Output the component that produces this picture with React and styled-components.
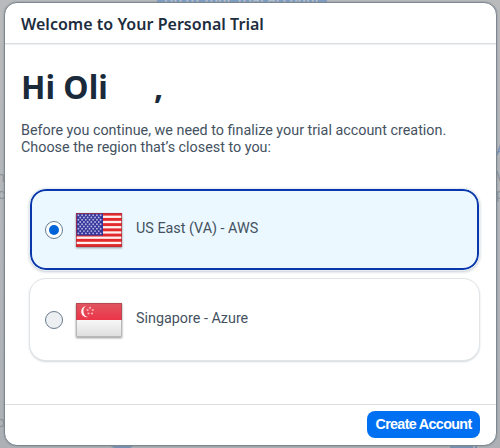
import React from "react";
import styled, { createGlobalStyle } from "styled-components";

const Global = createGlobalStyle`
  * { box-sizing: border-box; }
  body { margin: 0; overflow: hidden; }
  p, h1, h2 { margin: 0; }
`;
const Page = styled.div`
  position: relative;
  width: 500px;
  height: 448px;
  padding: 2px 3px 2px 4px;
  overflow: hidden;
  background: linear-gradient(#b9babb, #b3b6ba 50%, #adb1b5);
  font-family: "Roboto", sans-serif;
  color: #44525f;
`;
const Backdrop = styled.div`
  position: absolute;
  inset: 0;
  display: grid;
  grid-template-columns: 5px 491px 4px;
  color: #8b9299;
  font-size: 14px;
  line-height: 17px;
`;
const Edge = styled.div`
  display: flex;
  flex-direction: column;
  align-items: ${p => p.$right ? "flex-start" : "flex-end"};
  padding: ${p => p.$right ? "142px 0 0" : "169px 0 17px"};
`;
const EdgeLink = styled.span`
  margin-bottom: 10px;
  color: #6f8fb9;
`;
const EdgeEnd = styled.span`
  margin-top: auto;
`;
const Center = styled.div`
  display: flex;
  flex-direction: column;
  justify-content: space-between;
`;
const Chip = styled.div`
  display: flex;
  align-items: flex-end;
  justify-content: center;
  width: 170px;
  height: 7px;
  margin-left: 152px;
  background: #7f9fc6;
  color: #b9c3cf;
  font: 600 13.3px/15px "Noto Sans", sans-serif;
  white-space: nowrap;
`;
const Markers = styled.div`
  display: flex;
  height: 5px;
  padding-left: 105px;
`;
const Circle = styled.div`
  width: 24px;
  margin-right: 316px;
  border-radius: 0 0 12px 12px;
  background: #7891b1;
`;
const Bar = styled.div`
  width: ${p => p.$thin ? "2px" : "23px"};
  margin-right: 2px;
  background: #7891b1;
`;
const Dialog = styled.section`
  position: relative;
  display: flex;
  flex-direction: column;
  width: 493px;
  height: 444px;
  border: 1px solid #7d8790;
  border-radius: 13px;
  background: #fff;
  overflow: hidden;
  box-shadow: 0 0 2px #7d8790;
`;
const Header = styled.header`
  flex: 0 0 41px;
  padding: 9px 16px 0;
  border-bottom: 1px solid #d9dcde;
  box-shadow: 0 1px 1px #f0f1f2;
`;
const Title = styled.h2`
  color: #1d2d3e;
  font: 600 16px/24px "Noto Sans", sans-serif;
  letter-spacing: 0.03px;
  white-space: nowrap;
`;
const Body = styled.main`
  flex: 1;
  padding: 22px 15px 0 16px;
`;
const Greeting = styled.h1`
  display: flex;
  color: #1a2a3a;
  font: 700 32px/42px "Noto Sans", sans-serif;
`;
const Name = styled.span`
  width: 133px;
`;
const Intro = styled.p`
  margin-top: 14px;
  font-size: 14.35px;
  line-height: 17px;
  white-space: nowrap;
`;
const Options = styled.div`
  display: grid;
  gap: 7px;
  margin: 32px 0 0 8px;
`;
const Option = styled.label`
  display: flex;
  align-items: center;
  width: 451px;
  height: 83px;
  padding-left: 15px;
  border-radius: 17px;
  border: 1px solid ${p => p.$selected ? "#e3edf2" : "#e1e5e8"};
  background: ${p => p.$selected ? "#ebf8ff" : "#fff"};
  box-shadow: ${p => p.$selected ? "inset 0 0 0 2px #0b37ac, 0 1px 3px #c5cdd3" : "0 1px 2px #d3d8dc"};
`;
const Radio = styled.span`
  display: grid;
  place-items: center;
  width: 18px;
  height: 18px;
  border: 1px solid #687b8e;
  border-radius: 50%;
  background: ${p => p.$selected ? "#fff" : "#edf0f2"};
  &::after {
    content: "";
    width: 10px;
    height: 10px;
    border-radius: 50%;
    background: ${p => p.$selected ? "#0064d9" : "transparent"};
  }
`;
const Flag = styled.svg`
  width: 46px;
  height: 34px;
  margin: 0 14px 0 13px;
  filter: drop-shadow(0 1px 1px #777c);
`;
const Label = styled.span`
  font-size: 14.35px;
  line-height: 18px;
  padding-bottom: 1px;
`;
const Footer = styled.footer`
  display: flex;
  justify-content: flex-end;
  flex: 0 0 41px;
  padding: 6px 16px 0;
  border-top: 1px solid #dcdfe1;
`;
const Button = styled.button`
  width: 113px;
  height: 27px;
  padding: 0 0 1px;
  border: 0;
  border-radius: 8px;
  background: #0070f2;
  color: #fff;
  font: 700 14.3px/20px "Liberation Sans", sans-serif;
  letter-spacing: -0.65px;
  white-space: nowrap;
`;

const UsFlag = () => (
  <Flag viewBox="0 0 46 34">
    <rect width="46" height="34" fill="#e22a2c" />
    {[1, 3, 5, 7, 9, 11].map(n => <rect key={n} y={n * 34 / 13} width="46" height="2.3" fill="#fff1f0" />)}
    <rect width="27" height="22.5" fill="#35359b" />
    {Array.from({ length: 9 }, (_, r) => Array.from({ length: r % 2 ? 6 : 7 }, (_, c) => (
      <circle key={`${r}-${c}`} cx={2.4 + (r % 2) * 1.85 + c * 3.7} cy={2.2 + r * 2.27} r="0.95" fill="#b6b5e1" />
    )))}
    <rect x=".5" y=".5" width="45" height="33" fill="none" stroke="#b32e3b" strokeOpacity=".7" />
  </Flag>
);
const SgFlag = () => (
  <Flag viewBox="0 0 46 34">
    <defs>
      <linearGradient id="sg-red" x2="0" y2="1"><stop stopColor="#df5660" /><stop offset="1" stopColor="#ed3549" /></linearGradient>
      <linearGradient id="sg-white" x2="0" y2="1"><stop stopColor="#f7f7f7" /><stop offset="1" stopColor="#dedede" /></linearGradient>
    </defs>
    <rect width="46" height="17" fill="url(#sg-red)" />
    <rect y="17" width="46" height="17" fill="url(#sg-white)" />
    <path d="M10 3A5.6 5.6 0 1 0 12 14A6.2 6.2 0 0 1 10 3Z" fill="#fff1f2" />
    {[[14, 4.8], [11.6, 7], [16.8, 7], [12.5, 10.5], [16, 10.5]].map(([x, y]) => <circle key={`${x}-${y}`} cx={x} cy={y} r="1.1" fill="#ffb0b9" />)}
    <path d="M.5 17V.5H45.5V17" fill="none" stroke="#b64852" />
    <path d="M.5 17V33.5H45.5V17" fill="none" stroke="#b8b8b8" />
  </Flag>
);

const regions = [
  { name: "US East (VA) - AWS", Icon: UsFlag, selected: true },
  { name: "Singapore - Azure", Icon: SgFlag, selected: false },
];

export default function App() {
  return (
    <Page>
      <Global />
      <Backdrop>
        <Edge><span>in</span><span>c</span><EdgeEnd>o</EdgeEnd></Edge>
        <Center>
          <Chip>Go to Your Trial Account</Chip>
          <Markers><Circle /><Bar /><Bar $thin /></Markers>
        </Center>
        <Edge $right><EdgeLink>A</EdgeLink><span>V</span><span>p</span></Edge>
      </Backdrop>
      <Dialog>
        <Header><Title>Welcome to Your Personal Trial</Title></Header>
        <Body>
          <Greeting><Name>Hi Oli</Name>,</Greeting>
          <Intro>Before you continue, we need to finalize your trial account creation.<br />Choose the region that’s closest to you:</Intro>
          <Options>
            {regions.map(({ name, Icon, selected }) => (
              <Option key={name} $selected={selected}>
                <Radio $selected={selected} /><Icon /><Label>{name}</Label>
              </Option>
            ))}
          </Options>
        </Body>
        <Footer><Button>Create Account</Button></Footer>
      </Dialog>
    </Page>
  );
}
